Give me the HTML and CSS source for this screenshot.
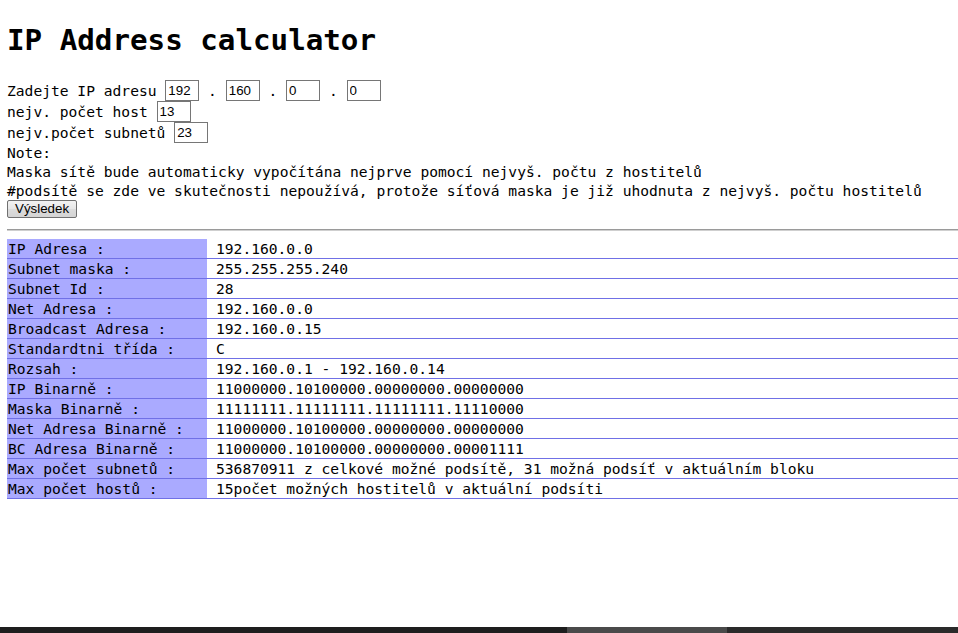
FILE: index.html
```html
<!DOCTYPE html>
<html lang="cs">
<head>
<meta charset="utf-8">
<title>IP Address calculator</title>
<link rel="stylesheet" href="styles.css">
</head>
<body>
<div class="page">
  <h1 class="title">IP Address calculator</h1>
  <form class="form">
    <div class="row">Zadejte IP adresu <input class="field" type="text" value="192"> . <input class="field" type="text" value="160"> . <input class="field" type="text" value="0"> . <input class="field" type="text" value="0"></div>
    <div class="row">nejv. počet host <input class="field" type="text" value="13"></div>
    <div class="row">nejv.počet subnetů <input class="field" type="text" value="23"></div>
    <div class="line">Note:</div>
    <div class="line">Maska sítě bude automaticky vypočítána nejprve pomocí nejvyš. počtu z hostitelů</div>
    <div class="line">#podsítě se zde ve skutečnosti nepoužívá, protože síťová maska je již uhodnuta z nejvyš. počtu hostitelů</div>
    <div class="btnrow"><button class="btn" type="button">Výsledek</button></div>
  </form>
  <hr class="rule">
  <table class="result">
    <tr><td class="key">IP Adresa :</td><td class="val">192.160.0.0</td></tr>
    <tr><td class="key">Subnet maska :</td><td class="val">255.255.255.240</td></tr>
    <tr><td class="key">Subnet Id :</td><td class="val">28</td></tr>
    <tr><td class="key">Net Adresa :</td><td class="val">192.160.0.0</td></tr>
    <tr><td class="key">Broadcast Adresa :</td><td class="val">192.160.0.15</td></tr>
    <tr><td class="key">Standardtni třída :</td><td class="val">C</td></tr>
    <tr><td class="key">Rozsah :</td><td class="val">192.160.0.1 - 192.160.0.14</td></tr>
    <tr><td class="key">IP Binarně :</td><td class="val">11000000.10100000.00000000.00000000</td></tr>
    <tr><td class="key">Maska Binarně :</td><td class="val">11111111.11111111.11111111.11110000</td></tr>
    <tr><td class="key">Net Adresa Binarně :</td><td class="val">11000000.10100000.00000000.00000000</td></tr>
    <tr><td class="key">BC Adresa Binarně :</td><td class="val">11000000.10100000.00000000.00001111</td></tr>
    <tr><td class="key">Max počet subnetů :</td><td class="val">536870911 z celkové možné podsítě, 31 možná podsíť v aktuálním bloku</td></tr>
    <tr><td class="key">Max počet hostů :</td><td class="val">15počet možných hostitelů v aktuální podsíti</td></tr>
  </table>
</div>
<div class="scrollbar"><div class="thumb"></div></div>
</body>
</html>
```
FILE: styles.css
```css
html, body {
  margin: 0;
  padding: 0;
  background: #fff;
}
body {
  font-family: "DejaVu Sans Mono", monospace;
  font-size: 14.62px;
  line-height: 19px;
  color: #000;
}
.page {
  padding: 0 0 0 7px;
}
.title {
  font-size: 29.2px;
  line-height: 37px;
  font-weight: bold;
  margin: 0;
  padding: 22px 0 21px 0;
}
.form {
  margin: 0;
}
.row {
  display: flex;
  align-items: center;
  height: 21px;
  white-space: pre;
}
.field {
  box-sizing: border-box;
  width: 34px;
  height: 21px;
  margin: 0;
  padding: 1px 2px;
  border: 1px solid #767676;
  font-family: "Liberation Sans", Arial, sans-serif;
  font-size: 13.33px;
  color: #000;
  background: #fff;
}
.line {
  height: 19px;
  white-space: pre;
}
.btnrow {
  height: 21px;
  display: flex;
  align-items: flex-start;
}
.btn {
  margin: 0;
  height: 18px;
  padding: 0 7px;
  font-family: "Liberation Sans", Arial, sans-serif;
  font-size: 13.33px;
  line-height: 16px;
  color: #000;
  border: 1px solid #707070;
  border-radius: 2px;
  background: linear-gradient(#f2f2f2, #e6e6e6 50%, #dcdcdc 51%, #d4d4d4);
}
.rule {
  margin: 8px 0;
  height: 0;
  border: 0;
  border-top: 1px solid #9a9a9a;
  border-bottom: 1px solid #cfcfcf;
}
.result {
  width: 100%;
  border-collapse: collapse;
  border-spacing: 0;
}
.result td {
  padding: 0 0 0 1px;
  height: 19px;
  line-height: 19px;
  border-bottom: 1px solid #7070e6;
  white-space: pre;
  vertical-align: middle;
}
.result .key {
  width: 199px;
  background: #aaaaff;
}
.result .val {
  padding-left: 9px;
}
.scrollbar {
  position: fixed;
  left: 0;
  right: 0;
  bottom: 0;
  height: 6px;
  background: #1e1e1e;
}
.thumb {
  position: absolute;
  left: 567px;
  width: 160px;
  top: 0;
  bottom: 0;
  background: #4a4a4a;
}
.thumb::after {
  content: "";
  position: absolute;
  left: 160px;
  width: 231px;
  top: 0;
  bottom: 0;
  background: #2a2a2a;
}
```
